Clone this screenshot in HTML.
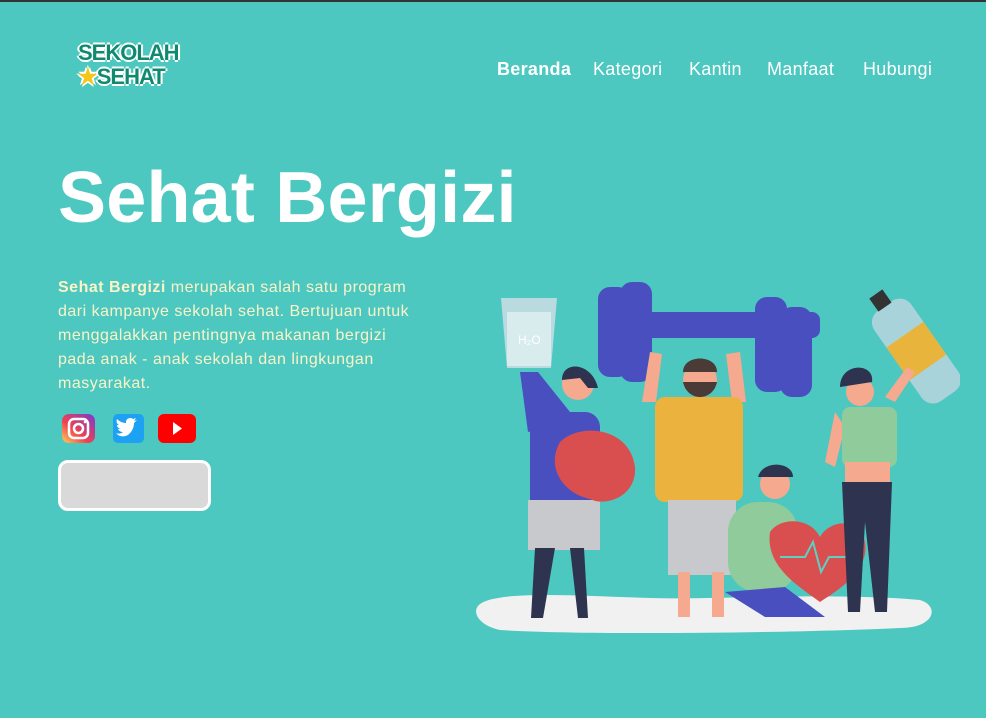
<!DOCTYPE html>
<html><head><meta charset="utf-8"><style>
html,body{margin:0;padding:0}
body{width:986px;height:718px;background:#4cc8c0;position:relative;overflow:hidden;font-family:"Liberation Sans",sans-serif;border-top:2px solid #333;box-sizing:border-box}
.logo{position:absolute;left:78px;top:39px;color:#0f8a6e;font-weight:bold;font-size:22px;line-height:24px;letter-spacing:-1px;text-shadow:2px 0 #fff,-2px 0 #fff,0 2px #fff,0 -2px #fff}
.nav span{position:absolute;top:57px;color:#fff;font-size:18px;letter-spacing:0.3px}
h1{position:absolute;left:58px;top:155px;margin:0;color:#fff;font-size:72px;font-weight:bold;letter-spacing:0.2px}
.p{position:absolute;left:58px;top:274px;width:420px;color:#fbf3c8;font-size:16px;line-height:24px;letter-spacing:0.5px;white-space:nowrap}
.btn{position:absolute;left:58px;top:458px;background:#d9d9d9;border:3px solid #fff;border-radius:10px;box-sizing:border-box;width:153px;height:51px}
</style></head><body>
<div class="logo">SEKOLAH<br><span style="color:#f5c518">★</span>SEHAT</div>
<div class="nav"><span style="left:497px"><b>Beranda</b></span><span style="left:593px">Kategori</span><span style="left:689px">Kantin</span><span style="left:767px">Manfaat</span><span style="left:863px">Hubungi</span></div>
<h1>Sehat Bergizi</h1>
<div class="p"><b>Sehat Bergizi</b> merupakan salah satu program<br>dari kampanye sekolah sehat. Bertujuan untuk<br>menggalakkan pentingnya makanan bergizi<br>pada anak - anak sekolah dan lingkungan<br>masyarakat.</div>
<svg style="position:absolute;left:60px;top:410px" width="140" height="34">
<defs><linearGradient id="ig" x1="0" y1="1" x2="1" y2="0"><stop offset="0" stop-color="#fdd35c"/><stop offset=".4" stop-color="#f2414f"/><stop offset="1" stop-color="#7a3bd1"/></linearGradient></defs>
<rect x="2" y="2" width="33" height="29" rx="7" fill="url(#ig)"/>
<rect x="9" y="7" width="19" height="19" rx="5" fill="none" stroke="#fff" stroke-width="2.5"/>
<circle cx="18.5" cy="16.5" r="4.5" fill="none" stroke="#fff" stroke-width="2.5"/><circle cx="25" cy="10" r="1.3" fill="#fff"/>
<rect x="53" y="2" width="31" height="29" rx="5" fill="#1da1f2"/>
<path d="M58 23c3 2 9 2 12-2 3-3 4-7 4-10l3-3-3 1 2-3-3 1c-2-2-6-1-7 2v2c-4 0-7-2-9-4-1 3 0 5 2 6h-2c0 2 2 4 4 4h-3c1 2 3 3 5 3-2 2-5 2-7 1z" fill="#fff"/>
<rect x="98" y="2" width="38" height="29" rx="6" fill="#f00"/>
<path d="M113 10l9 6.5-9 6.5z" fill="#fff"/>
</svg>
<div class="btn"></div>
<svg style="position:absolute;left:470px;top:270px" width="490" height="370">
<path d="M10 332c20-14 100-8 170-6s180-6 270 2c20 6 15 28-20 28-80 4-300 8-400 2-20-4-30-18-20-26z" fill="#f1f1f1"/>
<path d="M31 26h56l-6 70H37z" fill="#b9dbe0"/><rect x="37" y="40" width="44" height="54" fill="#d8ecee"/>
<text x="48" y="72" fill="#fff" font-size="12">H₂O</text>
<rect x="150" y="40" width="200" height="26" rx="8" fill="#4a4fbf"/>
<rect x="128" y="15" width="32" height="90" rx="12" fill="#4a4fbf"/><rect x="150" y="10" width="32" height="100" rx="12" fill="#4a4fbf"/>
<rect x="285" y="25" width="32" height="95" rx="12" fill="#4a4fbf"/><rect x="310" y="35" width="32" height="90" rx="12" fill="#4a4fbf"/>
<g transform="rotate(-35 430 60)"><rect x="410" y="30" width="45" height="110" rx="14" fill="#a9d3da"/><rect x="410" y="65" width="45" height="40" fill="#e8b43b"/><rect x="424" y="15" width="16" height="16" fill="#333"/></g>
<path d="M50 100l8 60 50-10-40-50z" fill="#4a4fbf"/>
<rect x="60" y="140" width="70" height="110" rx="15" fill="#4a4fbf"/>
<rect x="58" y="228" width="72" height="50" fill="#c7c9cc"/>
<path d="M65 276l-4 70h12l12-70zM100 276l8 70h10l-4-70z" fill="#2e3450"/>
<circle cx="108" cy="112" r="16" fill="#f5a98e"/><path d="M92 108c0-20 30-18 36 8l-10 0-8-10z" fill="#2e3450"/>
<path d="M90 170c20-20 70-15 75 25 2 30-30 40-45 32-25-5-45-30-30-57z" fill="#d94f4f"/>
<path d="M180 80l-8 50h14l6-48zM270 80l6 50h-14l-6-48z" fill="#f5a98e"/>
<rect x="185" y="125" width="88" height="105" rx="10" fill="#ebb33e"/>
<rect x="198" y="228" width="68" height="75" fill="#c7c9cc"/>
<path d="M208 300h12v45h-12zM242 300h12v45h-12z" fill="#f5a98e"/>
<circle cx="230" cy="108" r="17" fill="#f5a98e"/><path d="M213 110c4 20 30 20 34 0z" fill="#4a3b36"/><path d="M213 100c0-18 34-18 34 0z" fill="#4a3b36"/>
<rect x="258" y="230" width="70" height="90" rx="30" fill="#8fcb9b"/>
<circle cx="305" cy="212" r="15" fill="#f5a98e"/><path d="M288 205c5-18 35-15 35 0z" fill="#2e3450"/>
<path d="M255 320l60-5 40 30-60 0z" fill="#4a4fbf"/>
<path d="M300 260c10-15 40-15 50 5 10-18 40-20 45 5 5 30-30 50-45 60-20-15-55-35-50-70z" fill="#d94f4f"/>
<path d="M310 285h25l8-15 8 30 8-15h30" fill="none" stroke="#5fcfc2" stroke-width="2"/>
<path d="M365 140l-10 50 10 5 10-40zM425 130l20-30-8-5-22 30z" fill="#f5a98e"/>
<rect x="372" y="135" width="55" height="60" rx="8" fill="#8fcb9b"/>
<rect x="375" y="190" width="45" height="25" fill="#f5a98e"/>
<path d="M372 210h50l-5 130h-12l-10-90-5 90h-12z" fill="#2e3450"/>
<circle cx="390" cy="120" r="14" fill="#f5a98e"/><path d="M370 115c0-25 35-25 32-5z" fill="#2e3450"/>
</svg>
</body></html>
